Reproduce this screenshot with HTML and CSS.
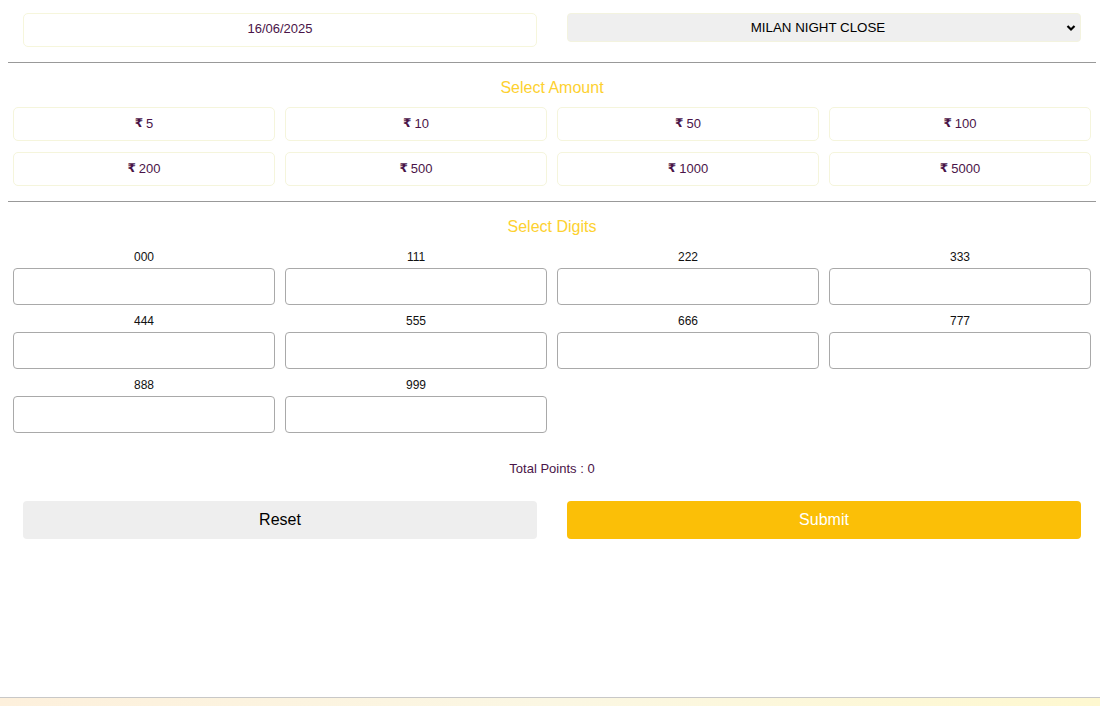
FILE: index.html
```html
<!DOCTYPE html>
<html lang="en">
<head>
<meta charset="utf-8">
<title>Bet</title>
<link rel="stylesheet" href="styles.css">
</head>
<body>
<div class="page">
  <div class="top-row">
    <div class="date-box">16/06/2025</div>
    <div class="select-box">
      <span class="select-text">MILAN NIGHT CLOSE</span>
      <svg class="chev" width="10" height="8" viewBox="0 0 10 8"><path d="M1.5 2 L5 5.5 L8.5 2" fill="none" stroke="#000" stroke-width="2.2"/></svg>
    </div>
  </div>
  <hr class="rule">
  <div class="section-title">Select Amount</div>
  <div class="amount-grid">
    <div class="amount"><span class="rs">₹</span> 5</div>
    <div class="amount"><span class="rs">₹</span> 10</div>
    <div class="amount"><span class="rs">₹</span> 50</div>
    <div class="amount"><span class="rs">₹</span> 100</div>
    <div class="amount"><span class="rs">₹</span> 200</div>
    <div class="amount"><span class="rs">₹</span> 500</div>
    <div class="amount"><span class="rs">₹</span> 1000</div>
    <div class="amount"><span class="rs">₹</span> 5000</div>
  </div>
  <hr class="rule rule2">
  <div class="section-title">Select Digits</div>
  <div class="digit-grid">
    <div class="digit"><label>000</label><div class="field"></div></div>
    <div class="digit"><label>111</label><div class="field"></div></div>
    <div class="digit"><label>222</label><div class="field"></div></div>
    <div class="digit"><label>333</label><div class="field"></div></div>
    <div class="digit"><label>444</label><div class="field"></div></div>
    <div class="digit"><label>555</label><div class="field"></div></div>
    <div class="digit"><label>666</label><div class="field"></div></div>
    <div class="digit"><label>777</label><div class="field"></div></div>
    <div class="digit"><label>888</label><div class="field"></div></div>
    <div class="digit"><label>999</label><div class="field"></div></div>
  </div>
  <div class="total">Total Points : 0</div>
  <div class="actions">
    <div class="btn reset">Reset</div>
    <div class="btn submit">Submit</div>
  </div>
</div>
<div class="footer"></div>
</body>
</html>
```
FILE: styles.css
```css
html, body {
  margin: 0;
  padding: 0;
  background: #fff;
}
body {
  font-family: "Liberation Sans", Arial, sans-serif;
  padding: 0 4px 0 8px;
}
.page {
  display: flex;
  flex-direction: column;
}
.top-row {
  display: grid;
  grid-template-columns: 1fr 1fr;
  gap: 30px;
  padding: 13px 15px 0;
  align-items: start;
}
.date-box {
  box-sizing: border-box;
  height: 34px;
  padding-bottom: 3px;
  border: 1px solid #f6f6dc;
  border-radius: 5px;
  display: flex;
  align-items: center;
  justify-content: center;
  font-size: 13px;
  color: #4a1448;
}
.select-box {
  box-sizing: border-box;
  height: 29px;
  padding-right: 12px;
  border: 1px solid #f3f3df;
  border-radius: 4px;
  background: #efefef;
  display: flex;
  align-items: center;
  justify-content: center;
  position: relative;
  font-size: 13.333px;
  color: #000;
}
.chev {
  position: absolute;
  right: 4px;
  top: 10px;
}
.rule {
  border: 0;
  border-top: 1px solid #999;
  margin: 15px 0 0;
  height: 0;
}
.section-title {
  text-align: center;
  color: #fdd130;
  font-size: 16px;
  line-height: 18px;
  margin-top: 16px;
}
.amount-grid {
  display: grid;
  grid-template-columns: repeat(4, 1fr);
  column-gap: 10px;
  row-gap: 11px;
  padding: 0 5px;
  margin-top: 10px;
}
.amount {
  box-sizing: border-box;
  height: 34px;
  padding-bottom: 2px;
  border: 1px solid #f5f5dc;
  border-radius: 5px;
  display: flex;
  align-items: center;
  justify-content: center;
  font-size: 13px;
  color: #4a1448;
}
.rs {
  font-weight: bold;
  margin-right: 3px;
  font-family: "DejaVu Sans", sans-serif;
  font-size: 12px;
}
.rule2 {
  margin-top: 15px;
}
.digit-grid {
  display: grid;
  grid-template-columns: repeat(4, 1fr);
  column-gap: 10px;
  row-gap: 9px;
  padding: 0 5px;
  margin-top: 14px;
}
.digit {
  display: flex;
  flex-direction: column;
  align-items: stretch;
}
.digit label {
  text-align: center;
  font-size: 12px;
  line-height: 14px;
  color: #111;
  margin-bottom: 4px;
}
.field {
  height: 35px;
  border: 1px solid #a9a9a9;
  border-radius: 4px;
}
.total {
  text-align: center;
  font-size: 13px;
  color: #4a1448;
  margin-top: 28px;
  line-height: 15px;
}
.actions {
  display: grid;
  grid-template-columns: 1fr 1fr;
  gap: 30px;
  padding: 0 15px;
  margin-top: 25px;
}
.btn {
  height: 38px;
  border-radius: 4px;
  display: flex;
  align-items: center;
  justify-content: center;
  font-size: 16px;
}
.reset {
  background: #eeeeee;
  color: #000;
}
.submit {
  background: #fbbf07;
  color: #fff;
}
.footer {
  position: fixed;
  left: 0;
  right: 0;
  bottom: 0;
  height: 8px;
  border-top: 1px solid #c8c8c8;
  background: linear-gradient(to right, #fdf0dc, #fbf7e3 50%, #fef8d0);
}
```
